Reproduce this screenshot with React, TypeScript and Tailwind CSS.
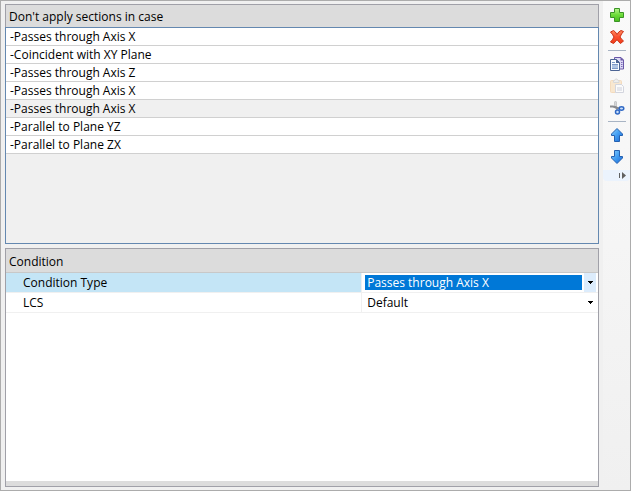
import { useState } from "react";

const sections = [
  "-Passes through Axis X",
  "-Coincident with XY Plane",
  "-Passes through Axis Z",
  "-Passes through Axis X",
  "-Passes through Axis X",
  "-Parallel to Plane YZ",
  "-Parallel to Plane ZX",
];

const conditionTypes = [
  "Passes through Axis X",
  "Passes through Axis Z",
  "Coincident with XY Plane",
  "Parallel to Plane YZ",
  "Parallel to Plane ZX",
];

function AddIcon() {
  return (
    <svg width="16" height="16" viewBox="0 0 16 16">
      <defs>
        <linearGradient id="add" x1="0" y1="0" x2="0" y2="1">
          <stop offset="0" stopColor="#b8f490" />
          <stop offset="0.5" stopColor="#6cdc38" />
          <stop offset="1" stopColor="#48bc20" />
        </linearGradient>
      </defs>
      <path d="M5.5 1.5h5v4h4v5h-4v4h-5v-4h-4v-5h4z" fill="url(#add)" stroke="#3a9426" strokeLinejoin="round" />
    </svg>
  );
}

function DeleteIcon() {
  return (
    <svg width="16" height="16" viewBox="0 0 16 16">
      <defs>
        <linearGradient id="del" x1="0" y1="0" x2="0" y2="1">
          <stop offset="0" stopColor="#ff8a60" />
          <stop offset="0.5" stopColor="#fa5030" />
          <stop offset="1" stopColor="#f03c18" />
        </linearGradient>
      </defs>
      <path
        d="M1.5 3L4.5 1.5Q6.5 2.5 8 5.5Q9.5 2.5 12 1.5L14.5 2.5Q12.5 4.5 11 8Q12.5 10.5 14.5 12L11.5 14.5Q9.5 13 8 10.5Q6.5 13 4.5 14.5L1.5 13Q3.5 11 5 8Q3.5 5 1.5 3z"
        fill="url(#del)"
        stroke="#cc3014"
        strokeLinejoin="round"
      />
    </svg>
  );
}

function CopyIcon() {
  return (
    <svg width="16" height="16" viewBox="0 0 16 16">
      <path d="M5.5 1.5h6.500l2.500 2.500v9h-9z" fill="#dcd8f4" stroke="#6a58a8" />
      <path d="M11.5 1v3.500h3.500z" fill="#6a58a8" />
      <path d="M12 6.5h1.500M12 8.500h1.500M12 10.500h1.500" stroke="#7c6cb8" />
      <path d="M1.5 3.5h6l3 3v8h-9z" fill="#f8fbff" stroke="#4c6494" />
      <path d="M7 3v4h4z" fill="#4c6494" />
      <path d="M3 8h6v4h-6z" fill="#b0c4e4" />
      <path d="M3 6.5h3M3 8.500h6M3 12.500h6" stroke="#7c98c8" />
    </svg>
  );
}

function PasteIcon() {
  return (
    <svg width="16" height="16" viewBox="0 0 16 16" opacity="0.45">
      <rect x="1.5" y="2.5" width="11" height="12" rx="1" fill="#fad4a0" stroke="#eeb878" />
      <path d="M4.5 4.500v-2h1l1-1.500h1.500l1 1.500h1v2z" fill="#e4e4e4" stroke="#b4b4b4" />
      <path d="M6.5 6.500h6l2 2v6h-8z" fill="#fff" stroke="#a8acc0" />
      <path d="M8 9h5v4h-5z" fill="#ccd0dc" />
    </svg>
  );
}

function CutIcon() {
  return (
    <svg width="16" height="16" viewBox="0 0 16 16" fill="none">
      <path d="M6.5 1.500v5l2 3" stroke="#94969a" strokeWidth="2" />
      <path d="M1 6.500h3l6 2" stroke="#888a8e" strokeWidth="2" />
      <path d="M6.5 2v4" stroke="#d4d6d8" />
      <ellipse cx="12.5" cy="8.5" rx="2.300" ry="1.700" fill="#cce0fa" stroke="#2f68c4" strokeWidth="1.500" />
      <ellipse cx="8.5" cy="12" rx="2" ry="2" fill="#cce0fa" stroke="#2f68c4" strokeWidth="1.500" />
    </svg>
  );
}

function ArrowIcon({ down = false }: { down?: boolean }) {
  return (
    <svg width="16" height="16" viewBox="0 0 16 16">
      <defs>
        <linearGradient id={down ? "arrowDown" : "arrowUp"} x1="0" y1="0" x2="1" y2="1">
          <stop offset="0" stopColor="#8cd0fc" />
          <stop offset="0.5" stopColor="#409cf2" />
          <stop offset="1" stopColor="#1c66d0" />
        </linearGradient>
      </defs>
      <path
        d={
          down
            ? "M5.5 1.500h5v6h3v1.500l-5.500 5.500l-5.500-5.500v-1.500h3z"
            : "M8 1.500l5.500 5.500v1.500h-3v6h-5v-6h-3v-1.500z"
        }
        fill={down ? "url(#arrowDown)" : "url(#arrowUp)"}
        stroke="#2460b0"
        strokeLinejoin="round"
      />
    </svg>
  );
}

function ToolButton({
  label,
  disabled,
  onClick,
  children,
}: {
  label: string;
  disabled?: boolean;
  onClick?: () => void;
  children: React.ReactNode;
}) {
  return (
    <button
      type="button"
      aria-label={label}
      disabled={disabled}
      onClick={onClick}
      className="flex h-[22px] w-6 items-center justify-center"
    >
      {children}
    </button>
  );
}

function PropertySelect({
  id,
  value,
  options,
  active,
  onChange,
}: {
  id: string;
  value: string;
  options: string[];
  active?: boolean;
  onChange: (value: string) => void;
}) {
  return (
    <div className="flex h-5 border-b border-l border-[#f0f0f0] pl-[3px]">
      <div className="relative flex-1 py-px">
        <select
          id={id}
          value={value}
          onChange={(e) => onChange(e.target.value)}
          className={`block h-[17px] w-full appearance-none border-y border-white pl-0.5 leading-4 outline-none ${
            active ? "bg-[#0078d7] text-white" : "bg-white"
          }`}
        >
          {options.map((option) => (
            <option key={option} className="bg-white text-black">
              {option}
            </option>
          ))}
        </select>
        <span
          className={`pointer-events-none absolute inset-y-0 right-0 flex w-4 items-center justify-center border-x-2 border-white ${
            active ? "bg-[#dcecfc]" : "bg-white"
          }`}
        >
          <svg width="5" height="3" viewBox="0 0 5 3">
            <path d="M0 0h5v1h-1v1h-1v1h-1v-1h-1v-1h-1z" fill="#000" />
          </svg>
        </span>
      </div>
    </div>
  );
}

export default function App() {
  const [items, setItems] = useState(sections);
  const [selected, setSelected] = useState(4);
  const [conditionType, setConditionType] = useState("Passes through Axis X");
  const [lcs, setLcs] = useState("Default");

  const move = (step: number) => {
    const target = selected + step;
    if (target < 0 || target >= items.length) return;
    const next = [...items];
    [next[selected], next[target]] = [next[target], next[selected]];
    setItems(next);
    setSelected(target);
  };

  return (
    <div className="flex h-screen border border-[#acacac] bg-[#f0f0f0] font-['Open_Sans','Noto_Sans',sans-serif] text-xs text-black">
      <main className="grid min-w-0 flex-1 grid-rows-2 gap-1 py-[3px] pl-1">
        {/* Section list */}
        <section className="flex flex-col">
          <h2 className="h-[23px] border border-b-0 border-[#a0a0a8] bg-[#dcdcdc] pl-[3px] leading-6">
            Don't apply sections in case
          </h2>
          <ul className="flex-1 border border-[#6488b0]">
            {items.map((item, i) => (
              <li key={i} className="border-b border-[#d0d0d0]">
                <button
                  type="button"
                  onClick={() => setSelected(i)}
                  className={`block h-[17px] w-full pl-1 text-left leading-[18px] ${
                    i === selected ? "bg-[#f0f0f0]" : "bg-white"
                  }`}
                >
                  {item}
                </button>
              </li>
            ))}
          </ul>
        </section>

        {/* Condition properties */}
        <section className="flex flex-col border border-[#a0a0a8] bg-white">
          <h2 className="h-6 border-b border-[#c8c8c8] bg-[#dcdcdc] pl-[3px] leading-[26px]">Condition</h2>
          <div className="grid grid-cols-[3fr_2fr]">
            <label
              htmlFor="condition-type"
              className="h-5 border-b border-[#f0f0f0] bg-[#c4e5f6] pl-[17px] leading-5"
            >
              Condition Type
            </label>
            <PropertySelect
              id="condition-type"
              value={conditionType}
              options={conditionTypes}
              active
              onChange={setConditionType}
            />
            <label htmlFor="lcs" className="h-5 border-b border-[#f0f0f0] pl-[17px] leading-5">
              LCS
            </label>
            <PropertySelect id="lcs" value={lcs} options={["Default"]} onChange={setLcs} />
          </div>
          <div className="mt-auto h-[5px] bg-[#dcdcdc]" />
        </section>
      </main>

      {/* Toolbar */}
      <aside className="ml-1 w-[27px] bg-linear-to-b from-[#fafafa] to-[#f0f0f0]">
        <div className="flex flex-col items-center pt-[3px]">
          <ToolButton label="Add" onClick={() => setItems([...items, "-Passes through Axis X"])}>
            <AddIcon />
          </ToolButton>
          <ToolButton label="Delete" onClick={() => setItems(items.filter((_, i) => i !== selected))}>
            <DeleteIcon />
          </ToolButton>
          <div className="my-0.5 h-px w-[18px] bg-[#a8b4c4]" />
          <ToolButton label="Copy">
            <CopyIcon />
          </ToolButton>
          <ToolButton label="Paste" disabled>
            <PasteIcon />
          </ToolButton>
          <ToolButton label="Cut">
            <CutIcon />
          </ToolButton>
          <div className="my-0.5 h-px w-[18px] bg-[#a8b4c4]" />
          <ToolButton label="Move up" onClick={() => move(-1)}>
            <ArrowIcon />
          </ToolButton>
          <ToolButton label="Move down" onClick={() => move(1)}>
            <ArrowIcon down />
          </ToolButton>
          <button
            type="button"
            aria-label="Toolbar options"
            className="mt-0.5 flex h-[11px] w-full items-center justify-end rounded-b-sm bg-[#ebf3fd] pr-1"
          >
            <svg width="7" height="7" viewBox="0 0 7 7">
              <path d="M0 1h1v5h-1z" fill="#606060" />
              <path d="M3 0l4 3.500l-4 3.500z" fill="#606060" />
            </svg>
          </button>
        </div>
      </aside>
    </div>
  );
}
